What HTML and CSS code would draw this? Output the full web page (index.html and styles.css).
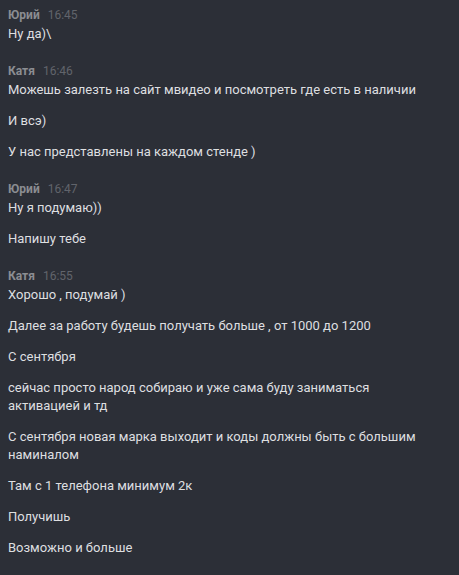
FILE: index.html
```html
<!DOCTYPE html>
<html lang="ru">

<head>
    <meta charset="UTF-8">
    <meta name="viewport" content="width=device-width, initial-scale=1.0">
    <title>Чат</title>
    <link rel="stylesheet" href="styles.css">
</head>

<body>
    <div class="chat">
        <div class="group">
            <div class="header"><span class="name">Юрий</span><span class="time">16:45</span></div>
            <p class="message">Ну да)\</p>
        </div>
        <div class="group">
            <div class="header"><span class="name">Катя</span><span class="time">16:46</span></div>
            <p class="message">Можешь залезть на сайт мвидео и посмотреть где есть в наличии</p>
            <p class="message">И всэ)</p>
            <p class="message">У нас представлены на каждом стенде )</p>
        </div>
        <div class="group">
            <div class="header"><span class="name">Юрий</span><span class="time">16:47</span></div>
            <p class="message">Ну я подумаю))</p>
            <p class="message">Напишу тебе</p>
        </div>
        <div class="group">
            <div class="header"><span class="name">Катя</span><span class="time">16:55</span></div>
            <p class="message">Хорошо , подумай )</p>
            <p class="message">Далее за работу будешь получать больше , от 1000 до 1200</p>
            <p class="message">С сентября</p>
            <p class="message">сейчас просто народ собираю и уже сама буду заниматься активацией и тд</p>
            <p class="message">С сентября новая марка выходит и коды должны быть с большим наминалом</p>
            <p class="message">Там с 1 телефона минимум 2к</p>
            <p class="message">Получишь</p>
            <p class="message">Возможно и больше</p>
        </div>
    </div>
</body>

</html>
```

FILE: styles.css
```css
body {
    margin: 0;
    padding: 0;
    background-color: #2c2f37;
    font-family: Roboto, "Noto Sans", sans-serif;
}

.chat {
    display: flex;
    flex-direction: column;
    gap: 20px;
    padding: 7px 8px;
    max-width: 430px;
}

.group {
    display: flex;
    flex-direction: column;
    gap: 13px;
}

.header {
    font-size: 12px;
    line-height: 16px;
    margin-bottom: -11px;
}

.name {
    color: #8b8d92;
    font-weight: bold;
    margin-right: 8px;
}

.time {
    color: #61646b;
}

.message {
    margin: 0;
    color: #dedfe0;
    font-size: 13px;
    line-height: 18px;
}
```
